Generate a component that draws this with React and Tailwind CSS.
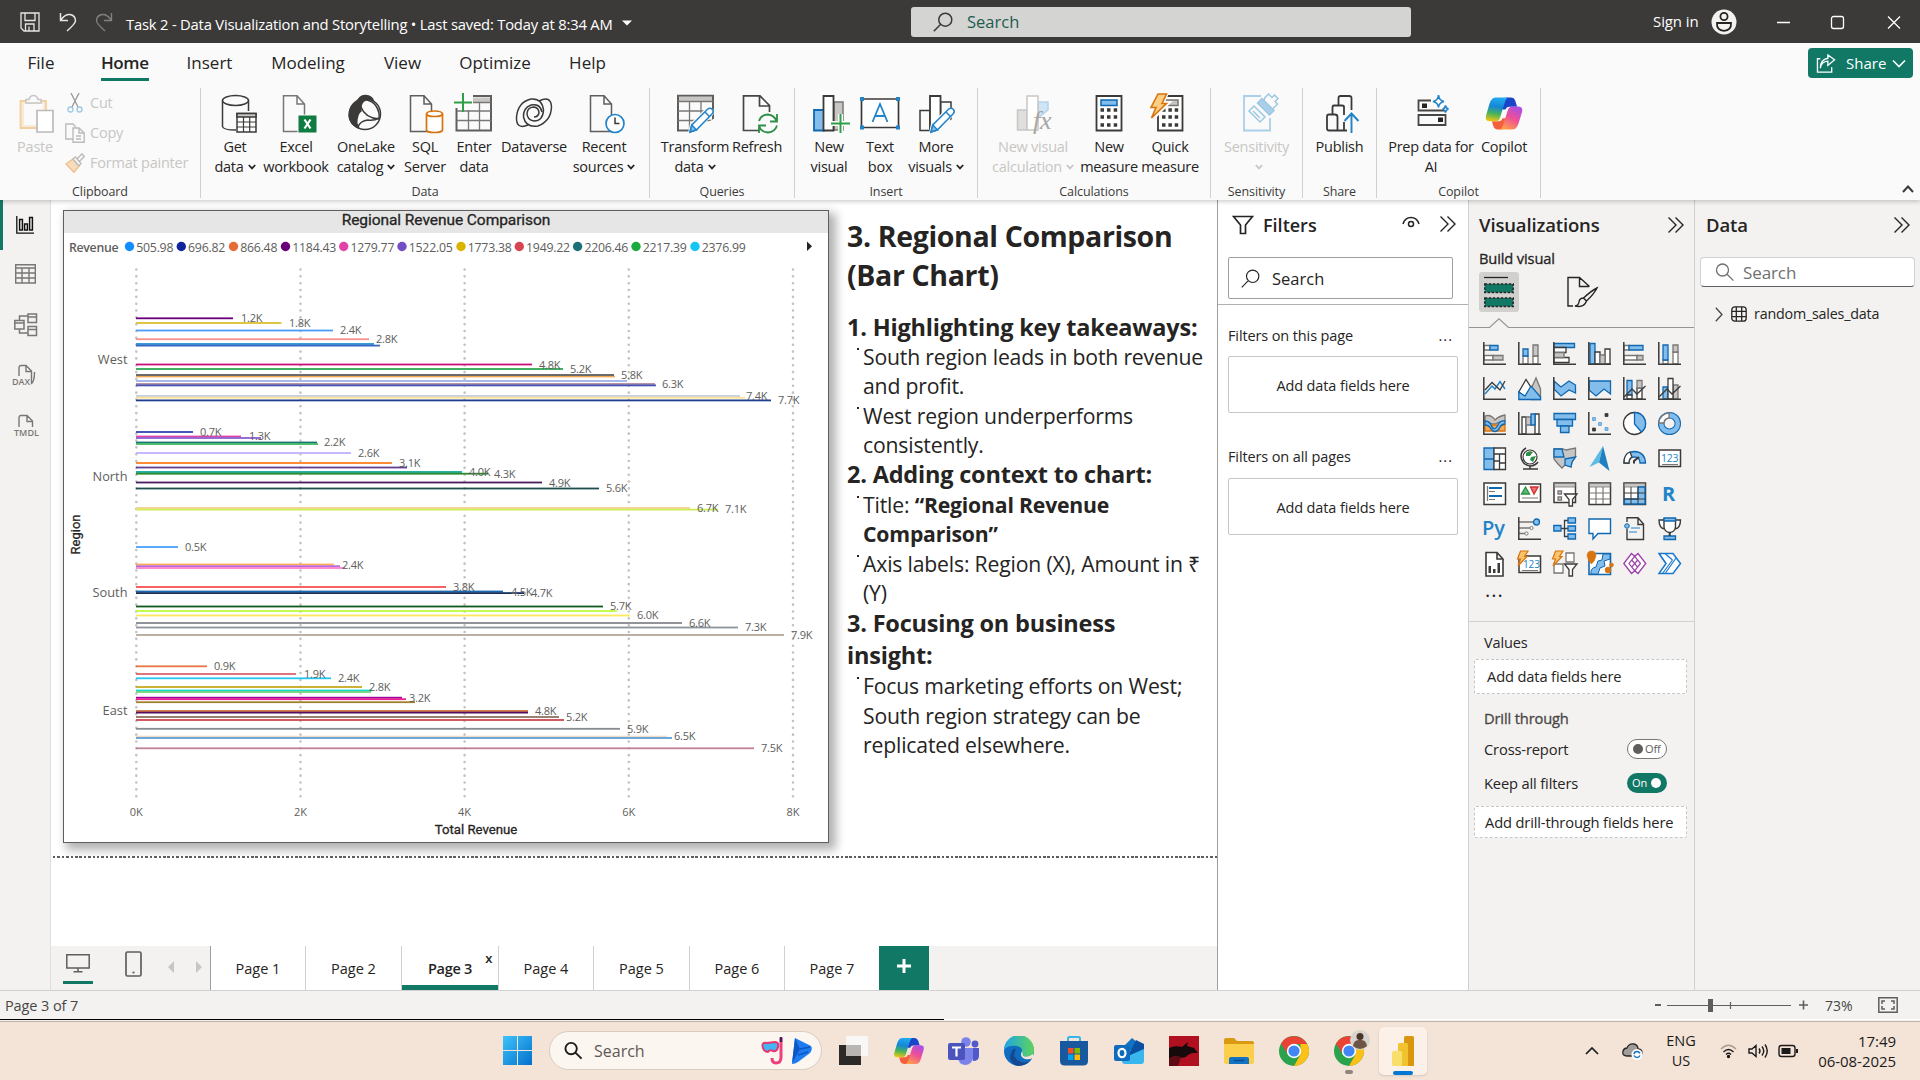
import React from "react";

const K = "#3b3a39";
const B = "#83bdec";
const BS = "#1068b0";
const G = "#c8c6c4";
const GS = "#797775";

/* ---------- shared glyphs ---------- */
function Lens({ className, flip, w = 1.3 }) {
  return (
    <svg viewBox="0 0 20 20" className={className} fill="none" stroke="currentColor" strokeWidth={w}>
      {flip ? (
        <path d="M7.5 2a6 6 0 1 1 0 12a6 6 0 0 1 0-12zM12 12.3l6.5 6.3" />
      ) : (
        <path d="M12.3 1.2a6.5 6.5 0 1 1 0 13a6.5 6.5 0 0 1 0-13zM7.7 12.3L.8 19.3" />
      )}
    </svg>
  );
}
function DoubleChevron() {
  return (
    <svg viewBox="0 0 18 18" className="h-[18px] w-[18px]" fill="none" stroke="#252423" strokeWidth="1.4">
      <path d="M1.5 1.5L9 9L1.5 16.5M8.5 1.5L16 9L8.5 16.5" />
    </svg>
  );
}
function Caret() {
  return (
    <svg viewBox="0 0 8 6" className="ml-1 h-1.5 w-2" fill="none" stroke="currentColor" strokeWidth="1.8">
      <path d="M.8 1L4 4.4L7.2 1" />
    </svg>
  );
}
function CopilotLogo({ className, id }) {
  return (
    <svg viewBox="0 0 38 34" className={className}>
      <defs>
        <linearGradient id={id + "a"} x1="0.3" y1="0" x2="0.15" y2="1">
          <stop offset="0" stopColor="#1fa8ee" />
          <stop offset="0.35" stopColor="#1686d8" />
          <stop offset="0.65" stopColor="#45b35c" />
          <stop offset="1" stopColor="#fcc80b" />
        </linearGradient>
        <linearGradient id={id + "b"} x1="0.8" y1="0" x2="0.3" y2="1">
          <stop offset="0" stopColor="#a94ee8" />
          <stop offset="0.5" stopColor="#ee4f97" />
          <stop offset="1" stopColor="#ff9d4b" />
        </linearGradient>
      </defs>
      <path d="M21 0.5h5q3.500 0 4.700 3.500l1.800 6h-8q-3 0-4 3l-4 0z" fill="#1a45c8" />
      <path d="M17 33.500h-4.500q-3.500 0-4.500-3.500l-1.500-5h7q3 0 4-3l4.500 0z" fill="#f4603c" />
      <path d="M10.500 0.500h13q-2.500 1-3.500 4.500l-5 16q-1.300 4-4.500 4h-6q-5.500 0-4-6l3.700-12.500q2-6 6.300-6z" fill={`url(#${id}a)`} />
      <path d="M27.500 33.500h-13q2.500-1 3.500-4.500l5-15.500q1.300-3.800 4.500-3.800h6q5.500 0 4 6l-3.700 12q-2 5.800-6.300 5.800z" fill={`url(#${id}b)`} />
    </svg>
  );
}

/* ---------- ribbon icons (40 x 40, centred on the label) ---------- */
const doc = "M0 .8H13.500L21 9V36.500H0ZM13.500 .8V9H21";
const Svg40 = ({ children }) => (
  <svg viewBox="0 0 40 40" className="h-10 w-10 shrink-0 overflow-visible" fill="none" stroke={K} strokeWidth="1.500">
    {children}
  </svg>
);
const Pencil = ({ x, y }) => (
  <g transform={`translate(${x} ${y})`}>
    <path d="M-1 26L1 17L18 0L26 3L24 8L8 24Z" fill="#fafafa" stroke="none" />
    <path d="M1 25L2.800 18L18.500 2.300Q21 .2 23.200 2.200Q25.300 4.400 23.200 6.800L7.500 22.800Z" fill="#fff" stroke="#2383c8" />
    <path d="M1 25L2.800 18L7.500 22.800Z" fill={B} stroke="#2383c8" />
    <path d="M16 5L20.500 9.500" stroke="#2383c8" />
  </g>
);
const Ic = {
  getdata: (
    <Svg40>
      <path d="M7.500 6.500V32.500Q8 36 21 36M33.500 6.500V17" />
      <ellipse cx="20.500" cy="6.500" rx="13" ry="5" fill="#fafafa" />
      <path d="M22 19.500H41V38H22Z" fill="#fff" />
      <path d="M22 19.500H41V23H22Z" fill={G} />
      <path d="M22 28H41M22 33H41M28.500 23V38M34.700 23V38" strokeWidth="1.200" />
    </Svg40>
  ),
  excel: (
    <Svg40>
      <path d={doc} transform="translate(7.500 1)" stroke="#797775" fill="#fafafa" />
      <rect x="22" y="21" width="19" height="18" fill="#107c41" stroke="#fafafa" strokeWidth="1" />
      <path d="M28.500 25.500L34.500 34.500M34.500 25.500L28.500 34.500" stroke="#fff" strokeWidth="2.200" />
    </Svg40>
  ),
  onelake: (
    <Svg40>
      <circle cx="19" cy="20" r="15.500" fill="#fafafa" />
      <path d="M11 8Q14 1 19.500 1.500Q26 2 27.500 7Q22 4 18 7Q14 10 15 17Q12 19 11 25Q10 31 13 34Q4 31 3 22Q3 12 11 8Z" fill={K} />
      <path d="M15 13Q19 24 33 25Q34 18 30 12Q27 7 19 5.500M12 33Q14 27 22 26Q28 27 33 24" />
    </Svg40>
  ),
  sql: (
    <Svg40>
      <path d={doc} transform="translate(5.500 1)" stroke="#605e5c" fill="#fafafa" />
      <path d="M21.500 20V36Q22 38.500 29.500 38.500Q37 38.500 37.500 36V20Q37 17 29.500 17Q22 17 21.500 20Z" fill="#fff" stroke="#d8730f" strokeWidth="1.700" />
      <path d="M21.500 20Q22 22.500 29.500 22.500Q37 22.500 37.500 20" stroke="#d8730f" strokeWidth="1.700" />
    </Svg40>
  ),
  enter: (
    <Svg40>
      <path d="M2.500 14V36.500H37V2H19" fill="none" stroke="#605e5c" strokeWidth="2" />
      <path d="M19 3.500H36V8H19Z" fill={G} stroke="none" />
      <path d="M3 17H37M3 26.500H37M14.500 16V36M25.500 8V36M19 8.500H37" stroke={GS} strokeWidth="1.300" />
      <path d="M9 -1V18M0 8.500H18" stroke="#2e9f46" strokeWidth="2" />
    </Svg40>
  ),
  dataverse: (
    <Svg40>
      <path d="M14 31Q2 36 2.500 23Q4 8 17 5Q28 4 29.500 16Q29 27 20 27Q13 26 13 19Q14 13 20 13Q25 14 25 19Q24 23 20 23" />
      <path d="M25 7Q37 1 37.500 13Q37 27 24 32Q12 34 9.500 23Q9 14 17 11Q26 9 28 18" />
    </Svg40>
  ),
  recent: (
    <Svg40>
      <path d={doc} transform="translate(6.500 1)" stroke="#605e5c" fill="#fafafa" />
      <circle cx="31" cy="29.500" r="9" fill="#fff" stroke="#2383c8" strokeWidth="1.700" />
      <path d="M31 23.500V29.500H35.500" />
    </Svg40>
  ),
  transform: (
    <Svg40>
      <path d="M3 1.800H38V36.500H3Z" stroke="#605e5c" strokeWidth="2" />
      <path d="M4 2.800H37V7H4Z" fill={G} stroke="none" />
      <path d="M3 7.500H38M3 17H38M3 26.500H38M14.500 8V36M26 8V36" stroke={GS} strokeWidth="1.300" />
      <path d="M38 27V38H20Z" fill="#fafafa" stroke="#fafafa" strokeWidth="3" />
      <Pencil x={14} y={13} />
    </Svg40>
  ),
  refresh: (
    <Svg40>
      <path d="M22 36.500H6.500V1.800H23L32.500 11.500V18M22.500 2V12H32.500" stroke="#484644" strokeWidth="1.700" />
      <path d="M22 27Q24 20.500 31 20.500Q37 21 39.500 27M40 20V27.500H33M40 31.500Q38 38 31 38.500Q24 38 22 32M22 39V31.500H29" stroke="#2e8f46" strokeWidth="1.800" />
    </Svg40>
  ),
  newvisual: (
    <Svg40>
      <path d="M25 8H34V36H25Z" fill={G} stroke={GS} />
      <path d="M5 16H15V36.500H5Z" fill={B} stroke={BS} strokeWidth="1.800" />
      <path d="M14.500 2H24.500V36.500H14.500Z" fill="#fff" strokeWidth="1.800" />
      <path d="M31.500 20V39M22 29.500H41" stroke="#fafafa" strokeWidth="5" />
      <path d="M31.500 20V39M22 29.500H41" stroke="#2e9f46" strokeWidth="2" />
    </Svg40>
  ),
  textbox: (
    <Svg40>
      <path d="M1.500 5H38.500V33.500H1.500Z" strokeWidth="1.700" fill="#fff" />
      <path d="M0 3H4V7H0ZM36 3H40V7H36ZM0 31.500H4V35.500H0ZM36 31.500H40V35.500H36Z" fill="#2383c8" stroke="none" />
      <path d="M12.500 28L20 10L27.500 28M15 22H25" stroke="#2383c8" strokeWidth="1.800" />
    </Svg40>
  ),
  morevisuals: (
    <Svg40>
      <path d="M24.500 8H35V36.500H24.500Z" />
      <path d="M4 16.500H14V36.500H4Z" />
      <path d="M14 2H24.500V36.500H14Z" fill="#fff" strokeWidth="1.800" />
      <path d="M36 27V39H20Z" fill="#fafafa" stroke="#fafafa" strokeWidth="3" />
      <Pencil x={14} y={13} />
    </Svg40>
  ),
  calc: (
    <Svg40>
      <path d="M25 8H35V16L25 24Z" fill="#cfe4f6" stroke="#b5d3ec" />
      <path d="M4.500 16H14V36H4.500Z" fill="#e1dfdd" stroke={G} />
      <path d="M14 2H25V36H14Z" fill="#fff" stroke={G} />
      <text x="20" y="35" fontSize="26" fontStyle="italic" fill="#a8a6a4" stroke="none" fontFamily="Liberation Serif">fx</text>
    </Svg40>
  ),
  measure: (
    <Svg40>
      <path d="M7.500 2H32.500V36.500H7.500Z" fill="#fff" strokeWidth="1.800" />
      <path d="M12 6H28V11.500H12Z" fill={B} stroke={BS} />
      <path d="M11.500 16h3.500M18 16h3.500M24.700 16h3.500M11.500 23h3.500M18 23h3.500M24.700 23h3.500M11.500 31h3.500M18 31h3.500M24.700 31h3.500" strokeWidth="3.600" />
    </Svg40>
  ),
  quick: (
    <Svg40>
      <path d="M8 2H32.500V36.500H8Z" fill="#fff" strokeWidth="1.800" />
      <path d="M16 6H28V11.500H16Z" fill={G} stroke={GS} />
      <path d="M12 16h3.500M18.400 16h3.500M24.700 16h3.500M12 23h3.500M18.400 23h3.500M24.700 23h3.500M12 31h3.500M18.400 31h3.500M24.700 31h3.500" strokeWidth="3.600" />
      <path d="M8 -1H17L12.500 9H18L1 26L6 14H0Z" fill="#fbcf83" stroke="#fafafa" strokeWidth="4" />
      <path d="M8 0H16.500L12 9.500H16.500L1.500 24L6 13.500H1Z" fill="#fbcf83" stroke="#d8730f" strokeWidth="1.600" />
    </Svg40>
  ),
  sensitivity: (
    <Svg40>
      <path d="M33 24V36.500H7V2H24" stroke="#a9d0e8" strokeWidth="1.800" />
      <path d="M28 3.500L31.500 0L35 3.500L37.500 1L41 4.500L38 7.500L40.500 10L33 17.500L25.500 10Z" fill="#fafafa" stroke="#9cc8e2" />
      <path d="M20.500 9L25 4.500L37 16.500L32.500 21Z" fill="#a9d0e8" stroke="#9cc8e2" />
      <path d="M12 17L17 12L28 23L23 28ZM16 17L23 24" fill="#fafafa" stroke="#9cc8e2" />
    </Svg40>
  ),
  publish: (
    <Svg40>
      <path d="M7 22.500Q7 20.500 9 20.500H15Q17.500 20.500 17.500 23V36.500H9Q7 36.500 7 34.500Z M12.500 20V13Q12.500 11.500 14 11.500H22Q24 11.500 24 13V21M18.500 11V4Q18.500 2 20.500 2H29Q31.500 2 31.500 4V16M17.500 36.500H27M24 28V36" strokeWidth="1.800" />
      <path d="M31.500 39V20.500M24.500 27L31.500 19.500L38.500 27" stroke="#2383c8" strokeWidth="1.900" />
    </Svg40>
  ),
  prep: (
    <Svg40>
      <path d="M20 6.500H7.500V16.500H34M7.500 21H34.500V31H7.500Z" stroke="#484644" strokeWidth="1.800" />
      <path d="M11 9.500H16V14H11ZM27 23.500H32V28H27Z" fill="#252423" stroke="none" />
      <path d="M27.500 1Q28 6.500 33 7.500Q28 8.500 27.500 13.500Q27 8.500 22 7.500Q27 6.500 27.500 1ZM34.500 11.500Q35 14.500 37.500 15Q35 15.500 34.500 18.500Q34 15.500 31.500 15Q34 14.500 34.500 11.500Z" stroke="#2383c8" strokeWidth="1.600" fill="#fff" />
    </Svg40>
  ),
};

function RBtn({ w, icon, a, b, caret, dim }) {
  return (
    <div className={`flex h-full shrink-0 flex-col items-center tracking-[-0.25px] ${w} ${dim ? "text-[#c8c6c4]" : "text-[#252423]"}`}>
      <div className="h-10">{icon}</div>
      <div className="mt-0.5 h-5 text-[14.500px] leading-[21px] whitespace-nowrap">{a}</div>
      <div className="mt-px flex h-5 items-center text-[14.500px] leading-5 whitespace-nowrap">
        {b}
        {caret && <Caret />}
      </div>
    </div>
  );
}
function Group({ w, label, children }) {
  return (
    <div className={`flex h-[110px] shrink-0 flex-col border-r border-[#d2d0ce] ${w}`}>
      <div className="flex h-[94px] shrink-0 pt-1.5">{children}</div>
      <div className="h-4 shrink-0 text-center text-[12.500px] leading-[19px] tracking-[-0.1px] text-[#3b3a39]">{label}</div>
    </div>
  );
}

function TitleBar() {
  return (
    <div className="flex h-[43px] shrink-0 items-center bg-[#3b3a39] text-[#fff]">
      <svg viewBox="0 0 20 20" className="ml-5 h-5 w-5" fill="none" stroke="#e8e6e4" strokeWidth="1.300">
        <path d="M1 1H19V19H4L1 16ZM5 1V8.500H15V1M5.500 19V12H14V19M9 14.500V19" />
      </svg>
      <svg viewBox="0 0 18 20" className="ml-[19px] h-5 w-[18px]" fill="none" stroke="#e8e6e4" strokeWidth="1.500">
        <path d="M1.500 1V8.500H9M1.800 8Q6 2 11 2.500Q16.500 3.500 16.500 9Q16 12 8 19" />
      </svg>
      <svg viewBox="0 0 18 20" className="ml-[18px] h-5 w-[18px]" fill="none" stroke="#83817f" strokeWidth="1.400">
        <path d="M16.500 1V8.500H9M16.200 8Q12 2 7 2.500Q1.500 3.500 1.500 9Q2 12 10 19" />
      </svg>
      <div className="ml-[13px] w-[486px] text-[14.800px] leading-5 whitespace-nowrap">
        <span className="relative top-0.5 tracking-[-0.21px]">Task 2 - Data Visualization and Storytelling&nbsp;•&nbsp;Last saved: Today at 8:34 AM</span>
      </div>
      <svg viewBox="0 0 10 6" className="mt-0.5 ml-[10px] h-1.5 w-[10px]"><path d="M0 .5H10L5 5.500Z" fill="#fff" /></svg>
      <div className="ml-[279px] flex h-[30px] w-[500px] items-center rounded-[3px] bg-[#d4d4d2] text-[#1d5c4f]">
        <Lens className="ml-[22px] h-5 w-5 text-[#3b3a39]" w={1.5} />
        <span className="ml-3.5 pt-px text-[16.500px]">Search</span>
      </div>
      <div className="ml-[242px] w-[46px] text-[15px] tracking-[-0.1px] whitespace-nowrap">Sign in</div>
      <svg viewBox="0 0 26 26" className="ml-3 h-[26px] w-[26px]">
        <circle cx="13" cy="13" r="12.500" fill="#f3f2f1" />
        <g fill="none" stroke="#252423" strokeWidth="1.800">
          <circle cx="13" cy="7.500" r="3.600" />
          <path d="M6 14H20Q20.500 21.500 13 21.800Q5.500 21.500 6 14Z" />
        </g>
      </svg>
      <svg viewBox="0 0 124 16" className="ml-10 h-4 w-[124px]" fill="none" stroke="#fff" strokeWidth="1.300">
        <path d="M0 8.500H13M111 2.500L123 14.500M123 2.500L111 14.500" />
        <rect x="54.500" y="2.500" width="12" height="12" rx="2" />
      </svg>
    </div>
  );
}

function Ribbon() {
  const tabs = [
    ["File", "w-[82px]"],
    ["Home", "w-[86px]"],
    ["Insert", "w-[83px]"],
    ["Modeling", "w-[114px]"],
    ["View", "w-[75px]"],
    ["Optimize", "w-[110px]"],
    ["Help", "w-[75px]"],
  ];
  return (
    <div className="relative z-10 h-[157px] shrink-0 bg-[#fafafa] shadow-[0_2px_4px_rgba(0,0,0,0.18)]">
      <div className="flex h-[45px] text-[17px] text-[#252423]">
        {tabs.map(([t, w]) => (
          <div key={t} className={`flex justify-center ${w}`}>
            <div className={t === "Home" ? "h-[38px] w-12 border-b-[3px] border-[#117865] leading-10 font-semibold tracking-[-0.4px]" : "leading-10"}>
              {t}
            </div>
          </div>
        ))}
        <div className="mt-[5px] mr-[7px] ml-auto flex h-[30px] w-[105px] items-center rounded-[4px] bg-[#117865] text-[15px] text-white">
          <svg viewBox="0 0 20 20" className="ml-2 h-[19px] w-5" fill="none" stroke="#fff" strokeWidth="1.400">
            <path d="M4 5H1V19H16V14M4 15Q5 8 12 7.500V12L19 6L12 1V4.500Q4 6 4 15Z" />
          </svg>
          <span className="ml-2.5">Share</span>
          <svg viewBox="0 0 14 9" className="ml-1.5 h-[9px] w-3.5" fill="none" stroke="#fff" strokeWidth="1.600"><path d="M1 1.500L7 7.500L13 1.500" /></svg>
        </div>
      </div>
      <div className="flex">
        <Group w="w-[201px]" label="Clipboard">
          <div className="flex w-[62px] flex-col items-center text-[#c8c6c4]">
            <svg viewBox="0 0 36 40" className="ml-3 h-10 w-9" fill="none">
              <path d="M1.500 7H27V34H1.500Z" fill="#f6ead9" stroke="#f3cf9f" strokeWidth="1.800" />
              <path d="M5 10H24V31H5Z" fill="#fafafa" />
              <path d="M7 9V5.500H10Q11 1.500 14.500 1.500Q18 1.500 19 5.500H22V9Z" fill="#fafafa" stroke="#c8c6c4" strokeWidth="1.500" />
              <path d="M18 16.500H34V38H18Z" fill="#fff" stroke="#bdbbb9" strokeWidth="1.700" />
            </svg>
            <div className="mt-0.5 ml-2 text-[14.500px] leading-[21px] tracking-[-0.25px]">Paste</div>
          </div>
          <div className="ml-[3px] flex flex-col text-[14.500px] tracking-[-0.22px] text-[#c8c6c4]">
            <div className="-mt-1.5 flex h-[30px] items-center">
              <svg viewBox="0 0 20 20" className="h-5 w-5" fill="none" strokeWidth="1.300">
                <path d="M6 0L13 14M14 0L7 14" stroke="#9a9896" />
                <circle cx="5.500" cy="16.500" r="2.500" stroke="#9cc8e2" />
                <circle cx="14.500" cy="16.500" r="2.500" stroke="#9cc8e2" />
              </svg>
              <span className="ml-[5px]">Cut</span>
            </div>
            <div className="flex h-[30px] items-center">
              <svg viewBox="0 0 20 20" className="h-5 w-5" fill="#fafafa" stroke="#bdbbb9" strokeWidth="1.400">
                <path d="M8 16H.8V1H8L10 3V5M8 5H14L19.200 10V19.200H8ZM14 5V10H19M11 13H16M11 16H16" />
              </svg>
              <span className="ml-[5px]">Copy</span>
            </div>
            <div className="flex h-[30px] items-center">
              <svg viewBox="0 0 20 20" className="h-5 w-5" fill="none" stroke="#bdbbb9" strokeWidth="1.400">
                <path d="M1 11L8 6L14 13L9 19.300Z" fill="#f8dcbc" stroke="#eec08c" />
                <path d="M8 6L10.500 4L16 10.500L14 13ZM12 6L17 .8L19.200 3.500L14.500 8.500" fill="#fafafa" />
              </svg>
              <span className="ml-[5px] whitespace-nowrap">Format painter</span>
            </div>
          </div>
        </Group>
        <Group w="w-[449px]" label="Data">
          <RBtn w="w-[68px]" icon={Ic.getdata} a="Get" b="data" caret />
          <RBtn w="w-[54px]" icon={Ic.excel} a="Excel" b="workbook" />
          <RBtn w="w-[86px]" icon={Ic.onelake} a="OneLake" b="catalog" caret />
          <RBtn w="w-8" icon={Ic.sql} a="SQL" b="Server" />
          <RBtn w="w-[66px]" icon={Ic.enter} a="Enter" b="data" />
          <RBtn w="w-[54px]" icon={Ic.dataverse} a="Dataverse" />
          <RBtn w="w-[86px]" icon={Ic.recent} a="Recent" b="sources" caret />
        </Group>
        <Group w="w-[145px]" label="Queries">
          <RBtn w="w-[90px]" icon={Ic.transform} a="Transform" b="data" caret />
          <RBtn w="w-[34px]" icon={Ic.refresh} a="Refresh" />
        </Group>
        <Group w="w-[183px]" label="Insert">
          <RBtn w="w-[68px]" icon={Ic.newvisual} a="New" b="visual" />
          <RBtn w="w-[34px]" icon={Ic.textbox} a="Text" b="box" />
          <RBtn w="w-[78px]" icon={Ic.morevisuals} a="More" b="visuals" caret />
        </Group>
        <Group w="w-[233px]" label="Calculations">
          <RBtn w="w-[110px]" icon={Ic.calc} a="New visual" b="calculation" caret dim />
          <RBtn w="w-[42px]" icon={Ic.measure} a="New" b="measure" />
          <RBtn w="w-[80px]" icon={Ic.quick} a="Quick" b="measure" />
        </Group>
        <Group w="w-[92px]" label="Sensitivity">
          <RBtn w="w-[91px]" icon={Ic.sensitivity} a="Sensitivity" b="" caret dim />
        </Group>
        <Group w="w-[74px]" label="Share">
          <RBtn w="w-[73px]" icon={Ic.publish} a="Publish" />
        </Group>
        <Group w="w-[164px]" label="Copilot">
          <RBtn w="w-[108px]" icon={Ic.prep} a="Prep data for" b="AI" />
          <RBtn w="w-[38px]" icon={<CopilotLogo id="rb" className="mt-[3px] h-[33px] w-[38px]" />} a="Copilot" />
        </Group>
        <svg viewBox="0 0 12 8" className="mt-[97px] mr-1.5 ml-auto h-2 w-3" fill="none" stroke={K} strokeWidth="2"><path d="M1 7L6 1.500L11 7" /></svg>
      </div>
    </div>
  );
}

function SideRail() {
  return (
    <div className="flex w-[51px] shrink-0 flex-col border-r border-[#e1dfdd] bg-[#f3f2f1]">
      <div className="flex h-[50px] items-center border-l-[3px] border-[#117865] pl-[13px]">
        <svg viewBox="0 0 18 18" className="h-[18px] w-[18px]" fill={G} stroke="#111" strokeWidth="1.300">
          <path d="M.8 0V17.200H18" fill="none" />
          <path d="M3.500 3.500H6.500V14H3.500ZM8.500 8H11.500V14H8.500ZM13.500 1.500H16.500V14H13.500Z" />
        </svg>
      </div>
      <svg viewBox="0 0 22 20" className="mt-3.5 ml-[15px] h-5 w-[22px]" fill="none" stroke="#797775" strokeWidth="1.400">
        <path d="M.7 .7H20.300V19H.7ZM.7 4H20.300M.7 9H20.300M.7 14H20.300M7 4V19M14 4V19" />
      </svg>
      <svg viewBox="0 0 24 24" className="mt-[29px] ml-3.5 h-6 w-6" fill="none" stroke="#797775" strokeWidth="1.500">
        <path d="M.8 7.500H10V16H.8ZM14 1H22.500V9.500H14ZM14 13.500H22.500V22.500H14ZM.8 10H10M14 4H22.500M14 16.500H22.500M5.500 7V3H14M5.500 16V20H14" />
      </svg>
      <div className="relative mt-[27px] ml-3 flex h-6 w-7 flex-col justify-end">
        <svg viewBox="0 0 26 24" className="absolute top-0 left-0 h-6 w-[26px]" fill="none" stroke="#797775" strokeWidth="1.400">
          <path d="M7 12V4Q7 1.500 9 1.500H14L19.500 7V19M14 2V7.500H19.500M19 20Q22.500 18 22.500 8" />
        </svg>
        <span className="relative top-[-2px] text-[9px] leading-[9px] font-semibold text-[#797775]">DAX</span>
      </div>
      <div className="relative mt-[26px] ml-3.5 flex h-6 w-7 flex-col justify-end">
        <svg viewBox="0 0 26 24" className="absolute top-0 left-0 h-6 w-[26px]" fill="none" stroke="#797775" strokeWidth="1.400">
          <path d="M5 13V4Q5 1.500 7 1.500H13L18.500 7V13M13 2V7.500H18.500" />
        </svg>
        <span className="relative top-[-1px] text-[9px] leading-[9px] font-semibold text-[#797775]">TMDL</span>
      </div>
    </div>
  );
}

/* ---------- chart ---------- */
// [y, end x, colour]
const bars = [
  [318.300, 233, "#6b007b"], [323, 281.500, "#dcbf30"], [330.500, 333, "#4a9cf8"], [339.200, 369, "#f79090"],
  [344, 374, "#2591d8"], [345.600, 380, "#3a66c0"], [364.500, 532, "#c8107c"], [369, 563, "#2fa850"],
  [376.500, 615, "#f2a955"], [375, 614, "#5c5c60"], [381, 627, "#9cb4ec"], [384, 655, "#b18a9c"], [385.400, 656, "#4355b5"],
  [396, 740, "#c2cbe2"], [397.700, 745, "#ffe391"], [400.400, 771, "#203c90"],
  [432, 193, "#3345b0"], [436.500, 241, "#e044a7"], [438, 261, "#8a60d0"], [442.500, 317, "#197278"], [444, 318, "#40b860"],
  [453, 351, "#c0b0ff"], [463, 392, "#ff7f22"], [467.500, 407, "#604090"], [472, 462, "#10a89a"], [473.700, 488, "#2a8a2a"],
  [482.500, 542, "#4b1c60"], [488.500, 599, "#1c4f4c"], [508, 690, "#f8d090"], [509.600, 718, "#cdee58"],
  [547, 178, "#4aa0ff"], [564.500, 334, "#ffab5a"], [566.200, 340, "#b86ada"], [568, 345, "#fb82d2"], [587, 446, "#f85050"],
  [591.500, 503, "#1a68b0"], [593.100, 524, "#15305c"], [606.500, 603, "#0e5a1a"], [611, 617, "#bdfb3e"], [615.500, 630, "#ffe75c"],
  [623, 682, "#85888e"], [627.500, 738, "#8e949c"], [635, 784, "#b5a898"],
  [666.300, 207, "#ea7645"], [674, 296, "#d96570"], [678.300, 331, "#25c6f2"], [687, 362, "#c8a820"], [690.500, 372, "#10dcc8"],
  [692, 371, "#70d478"], [697.700, 402, "#a0009a"], [699.200, 406, "#e82090"], [702.200, 415, "#a08028"], [711, 528, "#d07038"],
  [712.600, 528, "#541060"], [717, 559, "#8b7560"], [720, 564, "#cc4850"], [728.800, 620, "#868a92"], [736.600, 667, "#f0ddc8"],
  [738, 672, "#5f9fd4"], [748.300, 754, "#bf8298"],
];
const barLabels = [
  [241, 318, "1.2K"], [289, 323, "1.8K"], [340, 330, "2.4K"], [376, 339, "2.8K"], [539, 365, "4.8K"], [570, 369, "5.2K"],
  [621, 375, "5.8K"], [662, 384, "6.3K"], [746, 396, "7.4K"], [778, 400, "7.7K"],
  [200, 432, "0.7K"], [249, 436, "1.3K"], [324, 442, "2.2K"], [358, 453, "2.6K"], [399, 463, "3.1K"], [469, 472, "4.0K"],
  [494, 474, "4.3K"], [549, 483, "4.9K"], [606, 488, "5.6K"], [697, 508, "6.7K"], [725, 509, "7.1K"],
  [185, 547, "0.5K"], [342, 565, "2.4K"], [453, 587, "3.8K"], [511, 592, "4.5K"], [531, 593, "4.7K"], [610, 606, "5.7K"],
  [637, 615, "6.0K"], [689, 623, "6.6K"], [745, 627, "7.3K"], [791, 635, "7.9K"],
  [214, 666, "0.9K"], [304, 674, "1.9K"], [338, 678, "2.4K"], [369, 687, "2.8K"], [409, 698, "3.2K"], [535, 711, "4.8K"],
  [566, 717, "5.2K"], [627, 729, "5.9K"], [674, 736, "6.5K"], [761, 748, "7.5K"],
];
const legend = [
  [129.500, "505.98", "#118dff"], [181.300, "696.82", "#12239e"], [233.500, "866.48", "#e66c37"], [285.500, "1184.43", "#6b007b"],
  [343.700, "1279.77", "#e044a7"], [402, "1522.05", "#744ec2"], [461, "1773.38", "#d9b300"], [519.300, "1949.22", "#d64550"],
  [577.600, "2206.46", "#197278"], [636, "2217.39", "#1aab40"], [695, "2376.99", "#15c6f4"],
];
function Chart() {
  return (
    <div className="h-[633px] w-[766px] shrink-0 border border-[#605e5c] bg-white shadow-[5px_5px_9px_2px_rgba(0,0,0,0.3)]">
      <div className="h-[22px] bg-[#e6e6e6] text-center font-['Roboto'] text-[15.500px] leading-[19px] tracking-[-0.06px] text-[#252423] [-webkit-text-stroke:0.3px_#252423]">
        Regional Revenue Comparison
      </div>
      <svg viewBox="64 233 764 609" className="h-[609px] w-[764px]">
        <text x="69" y="251.700" fontSize="12.300" fontWeight="600" letterSpacing="-0.300" fill="#605e5c">Revenue</text>
        {legend.map(([x, t, c]) => (
          <g key={t}>
            <circle cx={x} cy="246.500" r="4.700" fill={c} />
            <text x={x + 6.800} y="251.700" fontSize="12.300" letterSpacing="-0.250" fill="#605e5c">{t}</text>
          </g>
        ))}
        <path d="M807 241.500L812 246.300L807 251Z" fill="#252423" />
        {[136.300, 300.500, 464.600, 628.800, 793].map((x, i) => (
          <g key={x}>
            <line x1={x} x2={x} y1="269.500" y2="803" stroke="#c4c2c0" strokeWidth="2.600" strokeLinecap="round" strokeDasharray="0.01 6.830" />
            <text x={x} y="816" fontSize="11" textAnchor="middle" fill="#605e5c">{i * 2}K</text>
          </g>
        ))}
        {bars.map(([y, x, c], i) => (
          <rect key={i} x="136" y={y - 0.900} width={x - 136} height="1.800" fill={c} />
        ))}
        {barLabels.map(([x, y, t], i) => (
          <text key={i} x={x} y={y + 4} fontSize="11" letterSpacing="-0.250" fill="#605e5c">{t}</text>
        ))}
        {[[359, "West"], [476, "North"], [592, "South"], [709.500, "East"]].map(([y, t]) => (
          <text key={t} x="127.500" y={y + 5} fontSize="12.800" textAnchor="end" fill="#605e5c">{t}</text>
        ))}
        <text x="476" y="833.500" fontSize="13.200" textAnchor="middle" fontFamily="Roboto" fill="#252423" stroke="#252423" strokeWidth="0.300">Total Revenue</text>
        <text transform="translate(80 534.500) rotate(-90)" fontSize="13" textAnchor="middle" fontFamily="Roboto" fill="#252423" stroke="#252423" strokeWidth="0.300">Region</text>
      </svg>
    </div>
  );
}

function Li({ children }) {
  return (
    <div className="relative pl-4 text-[21.200px] leading-[29.300px] tracking-[-0.18px]">
      <span className="absolute top-[6px] left-[10px] h-0.5 w-0.5 bg-[#252423]" />
      {children}
    </div>
  );
}
function Notes() {
  return (
    <div className="ml-[18px] w-[365px] pt-[7px] whitespace-nowrap text-[#252423]">
      <div className="text-[28.500px] leading-[39px] font-bold tracking-[-0.36px]">3. Regional Comparison<br />(Bar Chart)</div>
      <div className="mt-[17px] text-[23.500px] leading-[30px] font-bold tracking-[-0.2px]">1. Highlighting key takeaways:</div>
      <Li>South region leads in both revenue<br />and profit.</Li>
      <Li>West region underperforms<br />consistently.</Li>
      <div className="text-[23.500px] leading-[31px] font-bold tracking-[-0.2px]">2. Adding context to chart:</div>
      <Li>Title: <b>“Regional Revenue<br />Comparison”</b></Li>
      <Li>Axis labels: Region (X), Amount in ₹<br />(Y)</Li>
      <div className="text-[23.500px] leading-[32px] font-bold tracking-[-0.2px]">3. Focusing on business<br />insight:</div>
      <Li>Focus marketing efforts on West;<br />South region strategy can be<br />replicated elsewhere.</Li>
    </div>
  );
}

function PageTabs() {
  const tabs = [["Page 1", "w-[95px]"], ["Page 2", "w-24"], ["Page 3", "w-[97px]"], ["Page 4", "w-[95px]"], ["Page 5", "w-24"], ["Page 6", "w-[95px]"], ["Page 7", "w-[95px]"]];
  return (
    <div className="flex h-11 bg-[#f3f2f1]">
      <div className="flex w-[159px] shrink-0">
        <div className="ml-3 flex h-[38px] w-[30px] flex-col items-center border-b-[3px] border-[#117865] pt-2">
          <svg viewBox="0 0 24 19" className="h-[19px] w-6" fill="none" stroke="#605e5c" strokeWidth="1.500"><path d="M.8 .8H23.200V14H.8ZM12 14V18M7.500 17.800H16.500" /></svg>
        </div>
        <svg viewBox="0 0 17 26" className="mt-[5px] ml-8 h-[26px] w-[17px]" fill="none" stroke="#605e5c" strokeWidth="1.700"><rect x="1" y="1" width="15" height="24" rx="1.500" /><path d="M7.500 21.500H9.500" /></svg>
        <svg viewBox="0 0 34 12" className="mt-[15px] ml-[26px] h-3 w-[34px]" fill="#c8c6c4"><path d="M6 0V12L0 6ZM28 0V12L34 6Z" /></svg>
      </div>
      {tabs.map(([t, w], i) => (
        <div key={t} className={`relative flex shrink-0 items-center justify-center border-l bg-white pt-0.5 text-[14.500px] text-[#252423] ${i === 0 ? "border-[#a19f9d]" : "border-[#d2d0ce]"} ${w} ${i === 2 ? "font-semibold tracking-[-0.3px]" : ""}`}>
          {t}
          {i === 2 && <span className="absolute top-0.5 right-1.5 text-[13px] leading-5">x</span>}
          {i === 2 && <span className="absolute inset-x-0 bottom-0 h-[5px] bg-[#117865]" />}
        </div>
      ))}
      <div className="flex w-[50px] items-center justify-center bg-[#117865] pb-1">
        <svg viewBox="0 0 14 14" className="h-3.5 w-3.5" stroke="#fff" strokeWidth="3"><path d="M7 0V14M0 7H14" /></svg>
      </div>
    </div>
  );
}

function FiltersPane() {
  const box = "flex h-[57px] w-[230px] items-center justify-center rounded-[2px] border border-[#c8c6c4] pt-[3px] text-[14.500px] tracking-[-0.12px]";
  return (
    <div className="flex w-[251px] shrink-0 flex-col border-l border-[#a19f9d] bg-white text-[#252423]">
      <div className="flex h-[57px] items-center pb-[7px]">
        <svg viewBox="0 0 22 20" className="ml-3.5 h-5 w-[22px]" fill="none" stroke="#252423" strokeWidth="1.700"><path d="M1.500 1.500H20.500L13.500 10V18.500H8.500V10Z" /></svg>
        <span className="ml-[9px] w-[139px] text-[18px] font-semibold">Filters</span>
        <svg viewBox="0 0 18 12" className="-mt-1.5 h-3 w-[18px]" fill="none" stroke="#252423" strokeWidth="1.500"><path d="M1 8Q3 1.500 9 1.500Q15 1.500 17 8" /><circle cx="9" cy="8" r="2.500" /></svg>
        <div className="-mt-0.5 ml-[19px]"><DoubleChevron /></div>
      </div>
      <div className="ml-2.5 flex h-[42px] w-[225px] items-center rounded-[2px] border border-[#a19f9d] text-[16.500px]">
        <Lens className="ml-3 h-[19px] w-[19px]" w={1.2} />
        <span className="ml-3 pt-0.5">Search</span>
      </div>
      <div className="mt-[5px] border-t border-[#b3b0ad]" />
      <div className="mt-5 ml-2.5 flex w-[225px] justify-between text-[14.500px] leading-[22px] tracking-[-0.12px]"><span>Filters on this page</span><span className="tracking-[1px]">...</span></div>
      <div className="mt-[9px] ml-2.5"><div className={box}>Add data fields here</div></div>
      <div className="mt-[33px] ml-2.5 flex w-[225px] justify-between text-[14.500px] leading-[22px] tracking-[-0.12px]"><span>Filters on all pages</span><span className="tracking-[1px]">...</span></div>
      <div className="mt-[10px] ml-2.5"><div className={box}>Add data fields here</div></div>
    </div>
  );
}

/* ---------- visual gallery icons ---------- */
const AX = <path d="M.8 0V22.300H23" strokeWidth="1.500" />;
const P = (d, fill = "none", stroke = K, w = 1.300) => <path d={d} fill={fill} stroke={stroke} strokeWidth={w} />;
const T = (t, x, y, s, fill, weight) => <text x={x} y={y} fontSize={s} fill={fill} stroke="none" fontWeight={weight}>{t}</text>;
const Bolt = <path d="M2.500 -1H10L6.500 4.500H9L0 14L2.500 7H-.5Z" fill="#fbc46a" stroke="#d8730f" strokeWidth="1.200" />;
const visuals = [
  <>{P("M1 3.500H7V8H1ZM1 13.500H10V18H1Z", "#fff", GS)}{P("M7 3.500H15V8H7Z", B, BS)}{P("M10 13.500H20V18H10Z", G, GS)}{AX}</>,
  <>{P("M5 14H10V22H5ZM15 14H20V22H15Z", "#fff", GS)}{P("M5 7H10V14H5Z", B, BS)}{P("M15 3H20V14H15Z", G, GS)}{AX}</>,
  <>{P("M1 1.500H21.500V5.500H1Z", B, BS)}{P("M1 5.500H13V10.500H1ZM1 15.500H16V20.500H1Z", "#fff")}{P("M1 10.500H11V15.500H1Z", G, GS)}{AX}</>,
  <>{P("M2 1.500H7V22H2Z", B, BS)}{P("M7 10H12V22H7ZM17 7H22V22H17Z", "#fff")}{P("M12 13H17V22H12Z", G, GS)}{AX}</>,
  <>{P("M1 3.500H6V8H1ZM1 13.500H14V18H1Z", "#fff", GS)}{P("M6 3.500H20V8H6Z", B, BS)}{P("M14 13.500H20V18H14Z", G, GS)}{AX}</>,
  <>{P("M5 18H10V22H5ZM15 10H20V22H15Z", "#fff", GS)}{P("M5 3H10V18H5Z", B, BS)}{P("M15 3H20V10H15Z", G, GS)}{AX}</>,
  <>{P("M2 17L9 9L12 12L17 4.500L22 12", "none", "#2383c8", 1.500)}{P("M2 13L9 5.500L15 11L17 13L22 4")}{AX}</>,
  <>{P("M13 12L18 1L22.500 12V22.500H13Z", G, GS)}{P("M.8 15L8 2.500L14 12L7 20Z", "#fff")}{P("M.8 15L7 19L13 9L22.500 20V22.500H.8Z", B, BS)}</>,
  <>{P("M1 4L8 10L16 4L22.500 8V16L16 13L8 19L1 12Z", B, BS)}{AX}</>,
  <>{P("M1 4H22.500V17L16 12L8 19L1 13Z", B, BS)}{AX}</>,
  <>{P("M4 3.500H9V18H4Z", B, BS)}{P("M4 18H9V22H4ZM14 11H19V22H14Z", "#fff")}{P("M14 3.500H19V11H14Z", G, GS)}{P("M1 20L9 12L14 17L22.500 9")}{AX}</>,
  <>{P("M5 10H10V22H5Z", B, BS)}{P("M15 8H20V22H15Z", G, GS)}{P("M10 1.500H15V22H10Z", "#fff")}{P("M1 20L9 12L14 17L22.500 9")}{AX}</>,
  <>{P("M2 4Q8 2 12 8Q16 4 22 3V9Q16 10 12 12Q8 12 2 9Z", G, GS)}{P("M2 13H22V19H2Z", "#f9a94d", "#d8730f")}{P("M2 9Q7 9 9 15Q12 19 15 13Q17 8 22 9V12Q18 12 16 17Q12 22 8 17Q6 13 2 13Z", B, BS)}{AX}</>,
  <>{P("M4 5H8V22H4ZM17 2H21V22H17Z", "#fff")}{P("M8 5H13V13H8Z", G, GS)}{P("M13 2H17V13H13Z", B, BS)}{AX}</>,
  <>{P("M1 1.500H22.500V7.500H1Z", B, BS)}{P("M4 7.500H19.500V14H4Z", B, BS)}{P("M7.500 14H16V20.500H7.500Z", B, BS)}</>,
  <>{P("M4.500 5.500h3v3h-3zM10.500 10.500h3v3h-3zM17 15.500h3v3h-3z", B, "#5a9fd8", 0.800)}{P("M17 1.500h3v3h-3zM4.500 16h3v3h-3z", K, K, 0.800)}{AX}</>,
  <><circle cx="11.500" cy="11.500" r="11" fill="#fff" stroke={K} strokeWidth="1.300" />{P("M11.500 .5A11 11 0 0 1 18.500 20L11.500 12Z", B, BS)}</>,
  <><circle cx="11.500" cy="11.500" r="8.300" fill="none" stroke={BS} strokeWidth="6.500" /><circle cx="11.500" cy="11.500" r="8.300" fill="none" stroke={B} strokeWidth="4.500" />{P("M.8 11A11 11 0 0 1 11 .8V6Q6 7 6 11Z", "#fff", GS)}</>,
  <>{P("M1 1H11V22.500H1ZM1 12H11", B, BS)}{P("M11 1H22.500V22.500H11ZM11 7H22.500M16.500 7V22.500M11 14H16.500M16.500 16H22.500", "#fff")}</>,
  <><circle cx="12" cy="10" r="7" fill="#fff" stroke={K} strokeWidth="1.200" />{P("M8 6Q11 3 15 5L12 9L8 9ZM13 10L18 9L15 15L12 13Z", "#2e8f46", "none")}{P("M8 1Q1.500 5 3.500 12Q6 19 13 19Q18 18 20 15M12 19V22M5 22H20", "none", K, 1.500)}</>,
  <>{P("M1 2H10L13 3L22.500 1V10L19 15L18 20L12 18L9 21L5 17L1 12Z", G, GS)}{P("M1 2H9L11 10H1ZM12 12L22.500 10L19 15L18 20L12 18Z", B, BS)}</>,
  <>{P("M15 -1L1.500 20L11 15.500Z", "#5cbce4", "none")}{P("M15 -1L21.500 24L11 15.500Z", "#1f7fc0", "none")}</>,
  <>{P("M1 16Q1 5 11.500 4.500Q22 5 22.500 16H17Q17 10 11.500 10Q6 10 6 16Z", B, BS)}{P("M1 16Q1 7 7 5L9 10Q6 11.500 6 16Z", "#fff")}{P("M16 10L11 14V16.500", "none", K, 2)}</>,
  <>{P("M1 3H22.500V19.500H1Z", "#fff", K, 1.500)}{T("123", 2.900, 14.500, 10.500, "#2383c8", 500)}{P("M4 17.500H20", "none", GS, 1)}</>,
  <>{P("M1 1H22.500V22.500H1Z", "#fff", K, 1.500)}{P("M4.500 4V19", "none", GS)}{P("M6 6H19M6 14H19", "none", BS, 2)}{P("M6 9.500H12M6 17.500H12", "none", GS, 1)}</>,
  <>{P("M1 2H22.500V20H1Z", "#fff", K, 1.500)}{P("M3.500 12L7.500 5L11.500 12Z", "#5cba70", "#2e8f46")}{P("M12.500 5H20L16 12Z", "#f07070", "#d03030")}{P("M4 16H20", "none", GS, 1)}</>,
  <>{P("M1 1H22.500V20.500H1Z", "#fff", K, 1.500)}{P("M1.500 1.500H22V5H1.500Z", G, GS, 0.800)}{P("M5 9H8.500V12H5ZM5 15H8.500V18H5Z", G, GS)}{P("M11.500 12H24L19.500 17.500V24H16V17.500Z", "#fff")}</>,
  <>{P("M1 1H22.500V22.500H1Z", "#fff", K, 1.500)}{P("M1.500 1.500H22V5H1.500Z", G, GS, 0.800)}{P("M1 11H22.500M1 17H22.500M8 5V22M15 5V22", "none", GS, 1.200)}</>,
  <>{P("M1 1H22.500V22.500H1Z", "#fff", K, 1.500)}{P("M1.500 1.500H22V5H1.500Z", G, GS, 0.800)}{P("M15 5H22V22H1.500V17H15Z", B, BS)}{P("M1 11H22.500M1 17H22.500M8 5V22M15 5V22", "none", K, 1)}</>,
  <>{T("R", 4, 19, 20, "#2383c8", 700)}</>,
  <>{T("Py", -1, 18, 20, "#2383c8", 600)}</>,
  <>{P("M1 5H16M1 11H12M1 16.500H7", "none", GS, 1.500)}<circle cx="18.500" cy="5" r="3" fill={B} stroke={BS} strokeWidth="1.300" /><circle cx="13.500" cy="11" r="1.600" fill="#fff" stroke={GS} /><circle cx="8.500" cy="16.500" r="1.600" fill="#fff" stroke={GS} />{AX}</>,
  <>{P("M8 11.500H15M15 3.500H11.500V19.500H15")}{P("M.8 8.500H8V14H.8ZM15 .8H22.500V6H15ZM15 9H22.500V14H15ZM15 17H22.500V22H15Z", B, BS)}</>,
  <>{P("M1 2H22.500V16.500H10L5 22V16.500H1Z", "#fff", BS, 1.400)}</>,
  <>{P("M4 5V.8H15L20.500 7V22.500H4V12M15 1V7.500H20.500", "none", K, 1.400)}<circle cx="4" cy="9" r="2.300" fill={B} stroke={BS} />{P("M8 11H17M6 15H14", "none", "#2383c8", 1.200)}</>,
  <>{P("M6 2H17.500V10Q17 15 11.700 15.500Q6.500 15 6 10ZM6 3H1Q1 11 6.500 12M17.500 3H22.500Q22.500 11 17 12", "#fff", K, 1.400)}{P("M6 1H17.500V4H6ZM6 19H17.500V22.500H6Z", B, BS)}{P("M11.700 15.500V19", "none", K, 2)}</>,
  <>{P("M3 .5H14L20 7V24H3ZM14 1V7H20", "#fff", K, 1.600)}{P("M5.500 14H8V21H5.500ZM10 17H12.500V21H10ZM14.500 11H17V21H14.500Z", K, "none")}</>,
  <>{P("M1 4H22.500V20.500H1Z", "#fff", K, 1.500)}{T("123", 5, 16, 10, "#2383c8", 500)}{P("M4 18.500H20", "none", GS, 1)}{Bolt}</>,
  <>{P("M13 1H21V10H13ZM1 12H10V21H1Z", "#fff", GS)}{P("M11.500 12H24L19.500 17.500V24H16V17.500Z", "#fff")}{Bolt}</>,
  <>{P("M1 1.500H22.500V22.500H1Z", "#fff", BS, 1.600)}{P("M22 2V7L16 9L17 14L12 16L10 22H3Q2 16 8 15L10 9L14 8L15 2Z", B, BS, 1)}{P("M3.500 -1Q8 -1 8 4Q7 9 3.500 12Q0 9 -1 4Q-1 -1 3.500 -1ZM17 18a3 3 0 1 0 6 0a3 3 0 1 0-6 0ZM21.500 13a2 2 0 1 0 4 0a2 2 0 1 0-4 0Z", "#d8730f", "#d8730f", 0.500)}</>,
  <>{P("M8.500 1.500L11.700 4.300L15 1.500L22.800 11.500L15 21.500L11.700 18.700L8.500 21.500L.8 11.500Z", "#fff", "#9a3fa8", 1.300)}{P("M11.700 4.300L17.500 11.500L11.700 18.700L6 11.500ZM8.700 8L14.700 15.200M14.700 8L8.700 15.200", "none", "#9a3fa8", 1.200)}</>,
  <>{P("M1 1.500H15L22.500 11.500L15 21.500H1L8 11.500Z", "#fff", "#1a78d0", 1.500)}{P("M8 11.500L1 1.500M14.500 8L4.500 21.500M18 6L7.500 21M7 1.500L14.500 8", "none", "#1a78d0", 1.200)}</>,
];

function VisualizationsPane() {
  return (
    <div className="flex w-[227px] shrink-0 flex-col border-x border-[#d2d0ce] bg-[#f3f2f1] tracking-[-0.15px] text-[#252423]">
      <div className="flex h-[49px] items-center justify-between pr-[9px] pl-2.5 text-[18.500px] font-semibold">
        Visualizations<DoubleChevron />
      </div>
      <div className="pl-2.5 text-[14.700px] leading-[18px] [-webkit-text-stroke:0.3px_#252423]">Build visual</div>
      <div className="mt-[5px] flex h-10 pl-2.5">
        <div className="flex h-10 w-10 items-center justify-center rounded-[3px] bg-[#d2d0ce]">
          <svg viewBox="0 0 30 32" className="h-8 w-[30px]" fill="#117865" stroke="#252423">
            <path d="M0 1.500H24" strokeWidth="1.300" />
            <path d="M.8 8H29.200V16.500H.8ZM.8 22H29.200V30.500H.8Z" strokeWidth="1.500" strokeDasharray="2.500 1.500" />
          </svg>
        </div>
        <svg viewBox="0 0 32 32" className="mt-1 ml-12 h-8 w-8" fill="none" stroke="#252423" strokeWidth="1.400">
          <path d="M6 30H1V1.500H12.500L22.500 10.500M12.500 2V10.500H22M30 12Q24 15 16.500 22L19.500 25Q27 18 30 12ZM16.500 22Q12.500 22 12 26Q11.500 29.500 8 30Q17 32 19.500 25" />
        </svg>
      </div>
      <svg viewBox="0 0 225 12" className="mt-1.5 h-3 w-[225px]" fill="none" stroke="#979593" strokeWidth="1.200"><path d="M0 9.500H20.500L30 .8L39.500 9.500H225" /></svg>
      <div className="mt-3 ml-[14px] grid w-[210px] grid-cols-6 gap-y-[11px]">
        {visuals.map((v, i) => (
          <svg key={i} viewBox="0 0 24 24" className="h-6 w-6 overflow-visible" fill="none" stroke={K}>{v}</svg>
        ))}
      </div>
      <div className="mt-[9px] ml-4 h-[37px] shrink-0 text-[20px] leading-[10px] tracking-[1px]">...</div>
      <div className="-mt-px border-t border-[#d2d0ce]" />
      <div className="mt-2.5 pl-[15px] text-[14.500px] leading-[22px]">Values</div>
      <div className="mt-[5px] ml-[5px] flex h-[35px] w-[213px] items-center rounded-[2px] border border-dashed border-[#c8c6c4] bg-white pl-3 text-[14.700px]">Add data fields here</div>
      <div className="mt-3 pl-[15px] text-[14.700px] leading-[24px] text-[#484644] [-webkit-text-stroke:0.3px_#484644]">Drill through</div>
      <div className="mt-2 flex h-[22px] items-center justify-between pr-[27px] pl-[15px] text-[14.700px]">
        Cross-report
        <span className="flex h-5 w-10 items-center rounded-full border border-[#797775] bg-white pl-[5px] text-[11px] text-[#605e5c]">
          <span className="mr-0.5 h-2.5 w-2.5 rounded-full bg-[#605e5c]" />Off
        </span>
      </div>
      <div className="mt-3 flex h-[22px] items-center justify-between pr-[27px] pl-[15px] text-[14.700px]">
        Keep all filters
        <span className="flex h-5 w-10 items-center rounded-full bg-[#117865] pl-[5px] text-[11px] text-white">
          On<span className="ml-1 h-2.5 w-2.5 rounded-full bg-white" />
        </span>
      </div>
      <div className="mt-3 ml-[5px] flex h-8 w-[213px] items-center rounded-[2px] border border-dashed border-[#c8c6c4] bg-white pl-2.5 text-[14.700px] whitespace-nowrap">Add drill-through fields here</div>
    </div>
  );
}

function DataPane() {
  return (
    <div className="flex w-[225px] shrink-0 flex-col bg-[#f3f2f1] text-[#252423]">
      <div className="flex h-[57px] items-center justify-between pr-[9px] pb-2 pl-[11px] text-[18.500px] font-semibold tracking-[-0.15px]">
        Data<DoubleChevron />
      </div>
      <div className="ml-[5px] flex h-[30px] w-[215px] items-center rounded-[4px] border border-[#d1d1d1] border-b-[#616161] bg-white text-[17px] text-[#707070]">
        <Lens flip className="ml-[14px] h-5 w-5" />
        <span className="ml-2 pt-0.5 tracking-[-0.1px]">Search</span>
      </div>
      <div className="mt-[15px] flex h-6 items-center">
        <svg viewBox="0 0 8 15" className="ml-5 h-[15px] w-2" fill="none" stroke="#484644" strokeWidth="1.300"><path d="M.8 .8L7 7.500L.8 14.200" /></svg>
        <svg viewBox="0 0 16 16" className="ml-2 h-4 w-4" fill="none" stroke="#252423" strokeWidth="1.300"><rect x=".8" y=".8" width="14.400" height="14.400" rx="3" /><path d="M5.300 1V15M10.700 1V15M1 5.300H15M1 10.700H15" /></svg>
        <span className="ml-[7px] text-[14.300px] tracking-[-0.2px]">random_sales_data</span>
      </div>
    </div>
  );
}

function StatusBar() {
  return (
    <div className="flex h-[31px] shrink-0 flex-col border-t border-[#d2d0ce] bg-[#f3f2f1] text-[#484644]">
      <div className="flex h-[28px] items-center">
        <span className="ml-[5px] pt-0.5 text-[14.500px] tracking-[-0.1px]">Page 3 of 7</span>
        <svg viewBox="0 0 154 14" className="ml-auto h-3.5 w-[154px]" stroke="#605e5c" fill="none">
          <path d="M0 7H6" strokeWidth="2" /><path d="M12 7.500H136M75.500 4V11" strokeWidth="1.200" /><path d="M55.500 1V14" strokeWidth="5" /><path d="M144 7H153M148.500 2.500V11.500" strokeWidth="1.600" />
        </svg>
        <span className="ml-4 w-9 text-[14px]">73%</span>
        <svg viewBox="0 0 20 16" className="mr-[22px] ml-[17px] h-4 w-5" fill="none" stroke="#605e5c" strokeWidth="1.500"><path d="M.8 .8H19.200V15.200H.8ZM4 7V4H7M13 4H16V7M16 9V12H13M7 12H4V9" /></svg>
      </div>
      <div className="flex h-0.5"><div className="h-px w-[944px] bg-black" /><div className="h-px flex-1 bg-white" /></div>
    </div>
  );
}

function Chrome() {
  return (
    <svg viewBox="0 0 30 30" className="h-[30px] w-[30px]">
      <circle cx="15" cy="15" r="15" fill="#2ba24c" />
      <path d="M2 7.500L9 18.500L15 8H28A15 15 0 0 0 2 7.500Z" fill="#ea4335" />
      <path d="M15 30L21.500 18.500V8H28.300A15 15 0 0 1 15 30Z" fill="#fbc116" />
      <circle cx="15" cy="15" r="7.200" fill="#fff" />
      <circle cx="15" cy="15" r="5.600" fill="#4285f4" />
    </svg>
  );
}

function Taskbar() {
  const s30 = "h-[30px] w-[30px]";
  return (
    <div className="flex h-[59px] shrink-0 items-center border-t border-[#bcb2aa] bg-[#f4e4d8] pb-px text-[#1b1b1b]">
      <svg viewBox="0 0 29 29" className="ml-[503px] h-[29px] w-[29px]">
        <defs><linearGradient id="win" x2="1" y2="1"><stop offset="0" stopColor="#3fc3fb" /><stop offset="1" stopColor="#0370cb" /></linearGradient></defs>
        <path d="M0 0H14V14H0ZM15 0H29V14H15ZM0 15H14V29H0ZM15 15H29V29H15Z" fill="url(#win)" />
      </svg>
      <div className="ml-[17px] flex h-[39px] w-[273px] items-center rounded-full border border-[#d9cbc1] bg-[#fcf6f1]">
        <Lens flip w={2} className="ml-3.5 h-[19px] w-[19px]" />
        <span className="ml-[11px] text-[16px] text-[#5c5854]">Search</span>
        <svg viewBox="0 0 52 28" className="mr-2 ml-auto h-7 w-[52px]" fill="none">
          <path d="M20 1V20Q20 26 15 26Q11 26 11 21" stroke="#ee3f7e" strokeWidth="3" />
          <path d="M1.500 9Q1 5 6 6L14 5Q18 5 17 10Q16 15 12 14Q9 12 7 15Q2 14 1.500 9Z" fill="#42b6f3" stroke="#e8356f" strokeWidth="2" />
          <path d="M20 0V5" stroke="#4b1c60" strokeWidth="2.500" />
          <path d="M34 1L50 9Q52 12 49 16L37 25Q34 27 31 27Z" fill="#1d7cf0" /><path d="M34 1L39 12L31 26Z" fill="#0c57c4" /><path d="M39 12L49 10M37 18L47 15" stroke="#0c57c4" strokeWidth="1.500" />
        </svg>
      </div>
      <svg viewBox="0 0 30 30" className={`ml-[17px] ${s30}`}><path d="M0 9H22V29H0Z" fill="#2b2a29" /><path d="M7 0H29V20H7Z" fill="#f8f8f8" fillOpacity=".92" /><path d="M7 9H22V20H7Z" fill="#b9b5b2" /></svg>
      <CopilotLogo id="tb" className="ml-[25px] h-[28px] w-[30px]" />
      <svg viewBox="0 0 32 30" className="ml-[24px] h-[30px] w-8">
        <circle cx="18" cy="6" r="4.800" fill="#7b83eb" /><circle cx="27" cy="8" r="3.400" fill="#5059c9" />
        <path d="M22 12H31V20Q31 25 25 25Z" fill="#5059c9" /><path d="M10 12H25V21Q24 29 17 29Q10 28 10 21Z" fill="#7b83eb" />
        <rect y="7" width="17" height="17" rx="2" fill="#4b53bc" /><path d="M4 11.500H13M8.500 11.500V20.500" stroke="#fff" strokeWidth="2.200" />
      </svg>
      <svg viewBox="0 0 30 30" className={`ml-[24px] ${s30}`}>
        <defs><linearGradient id="eg" x2="1"><stop offset="0" stopColor="#1fa4e8" /><stop offset="1" stopColor="#5fd35a" /></linearGradient></defs>
        <circle cx="15" cy="15" r="15" fill="#0f6cbf" />
        <path d="M0 14A15 15 0 0 1 30 14Q30 21 23 21Q17 21 18 17Q19 11 13 10Q4 9 0 14Z" fill="url(#eg)" />
        <path d="M12 13Q7 22 17 26Q23 28 28 23Q20 32 11 29Q3 24 8 15Q10 12 12 13Z" fill="#16478f" />
        <path d="M18 15Q15 21 21 23Q25 24 29 22Q30 18 29 18Q24 22 19 20Z" fill="#f4e4d8" />
      </svg>
      <svg viewBox="0 0 30 30" className={`ml-[25px] ${s30}`}>
        <path d="M9 6V2.500Q9 1 10.500 1H19.500Q21 1 21 2.500V6" fill="none" stroke="#35b5ea" strokeWidth="2" />
        <path d="M1 5H29V25Q29 29.500 24 29.500H6Q1 29.500 1 25Z" fill="#17589f" />
        <path d="M9 12h5.500v5.500H9z" fill="#f25022" /><path d="M15.500 12H21v5.500h-5.500z" fill="#7fba00" /><path d="M9 18.500h5.500V24H9z" fill="#00a4ef" /><path d="M15.500 18.500H21V24h-5.500z" fill="#ffb900" />
      </svg>
      <svg viewBox="0 0 30 30" className={`ml-[25px] ${s30}`}>
        <path d="M8 12L18 2L30 12V20H8Z" fill="#1272c4" /><path d="M8 16L30 12V25Q30 28 27 28H11Q8 28 8 25Z" fill="#37b7ee" /><path d="M14 20L30 13V8L22 4Z" fill="#0a4fa0" />
        <rect y="9" width="16" height="16" rx="2" fill="#0f6cbd" /><ellipse cx="8" cy="17" rx="3.500" ry="4.200" fill="none" stroke="#fff" strokeWidth="2.200" />
      </svg>
      <svg viewBox="0 0 30 30" className={`ml-[25px] ${s30}`}>
        <path d="M0 0H30V30H0Z" fill="#b01020" /><path d="M0 12Q6 9 13 11L19 6L18 10L25 12L29 17L23 17L19 19Q16 23 10 21Q4 19 0 23Z" fill="#160a0c" /><path d="M0 23Q6 19 12 21L9 30H0Z" fill="#5d0c14" />
      </svg>
      <svg viewBox="0 0 30 30" className={`ml-[25px] ${s30}`}>
        <path d="M0 4Q0 2 2 2H10L13 5H28Q30 5 30 7V12H0Z" fill="#d99a12" /><path d="M0 8H30V26Q30 28 28 28H2Q0 28 0 26Z" fill="#fccf4b" /><path d="M5 28V23Q5 21 7 21H23Q25 21 25 23V28Z" fill="#1272c4" /><path d="M10 24.500H20" stroke="#0a4a8a" strokeWidth="1.500" />
      </svg>
      <div className="ml-[25px]"><Chrome /></div>
      <div className="relative ml-[25px] h-[30px] w-[30px]">
        <Chrome />
        <svg viewBox="0 0 20 20" className="absolute -top-1.5 -right-1.5 h-5 w-5"><circle cx="10" cy="10" r="10" fill="#d7d3cf" /><circle cx="10" cy="6.500" r="3.500" fill="#4b3428" /><path d="M3 16Q4 9 10 10Q16 9 17 16Q10 22 3 16Z" fill="#6d5444" /></svg>
        <span className="absolute -bottom-2 left-[11px] h-1 w-2 rounded-full bg-[#8f8680]" />
      </div>
      <div className="relative ml-[15px] flex h-12 w-12 items-center justify-center rounded-[5px] bg-[#fbf1e8] shadow-sm">
        <svg viewBox="0 0 24 30" className="h-[30px] w-6"><path d="M13 1.500Q13 0 14.500 0H21.500Q23 0 23 1.500V30H13Z" fill="#d9960f" /><path d="M7 8.500Q7 7 8.500 7H15.500Q17 7 17 8.500V30H7Z" fill="#f0c32f" /><path d="M1 16.500Q1 15 2.500 15H9.500Q11 15 11 16.500V30H2.500Q1 30 1 28.500Z" fill="#f8df6b" /></svg>
        <span className="absolute bottom-0 left-[14px] h-1 w-5 rounded-full bg-[#0078d4]" />
      </div>
      <svg viewBox="0 0 14 8" className="ml-[158px] h-2 w-3.5" fill="none" stroke="#1b1b1b" strokeWidth="1.700"><path d="M1 7L7 1L13 7" /></svg>
      <svg viewBox="0 0 22 20" className="ml-[23px] h-5 w-[22px]"><path d="M5 15Q0 15 1 10Q2 7 5 7Q7 2 12 3Q16 4 16 8Q20 8 20 12Q20 15 17 15Z" fill="#a19d9a" stroke="#2b2a29" strokeWidth="1.300" /><circle cx="15" cy="13.500" r="5.500" fill="#fff" /><path d="M12 13Q12.500 10.500 15 10.500Q17 10.500 18 12.500M18 14.500Q17 16.500 15 16.500Q13 16.500 12 14.500" fill="none" stroke="#1272c4" strokeWidth="1.500" /></svg>
      <div className="ml-[17px] w-[40px] text-center text-[14.500px] leading-5">ENG<br />US</div>
      <svg viewBox="0 0 80 20" className="ml-[18px] h-5 w-20" fill="none" stroke="#1b1b1b" strokeWidth="1.400">
        <path d="M2 8Q9.500 .5 17 8" stroke="#a59c95" /><path d="M4.500 11Q9.500 6 14.500 11M7 13.500Q9.500 11 12 13.500" /><circle cx="9.500" cy="15.500" r="1" fill="#1b1b1b" />
        <path d="M30 8H33L37 4.500V15.500L33 12H30ZM40 7.500Q42 10 40 12.500M43 5.500Q46.500 10 43 14.500M46 3.500Q50.500 10 46 16.500" />
        <rect x="60" y="4.500" width="16" height="11" rx="2.500" /><rect x="62.500" y="7" width="9" height="6" fill="#1b1b1b" stroke="none" /><path d="M78 8V12" strokeWidth="2" />
      </svg>
      <div className="mr-6 ml-auto text-right text-[15px] leading-5 tracking-[-0.05px]">17:49<br />06-08-2025</div>
    </div>
  );
}

export default function App() {
  return (
    <div className="flex h-[1080px] w-[1920px] flex-col overflow-hidden bg-white font-['Open_Sans','Noto_Sans',sans-serif]">
      <TitleBar />
      <Ribbon />
      <div className="flex h-[790px] shrink-0">
        <SideRail />
        <div className="flex w-[1166px] shrink-0 flex-col">
          <div className="flex h-[656px] pt-2.5 pl-3"><Chart /><Notes /></div>
          <div className="ml-0.5 h-0.5 bg-[repeating-linear-gradient(90deg,#605e5c_0_2.5px,#fff_2.5px_4.4px)]" />
          <div className="mt-auto flex flex-col"><PageTabs /></div>
        </div>
        <FiltersPane />
        <VisualizationsPane />
        <DataPane />
      </div>
      <StatusBar />
      <Taskbar />
    </div>
  );
}
